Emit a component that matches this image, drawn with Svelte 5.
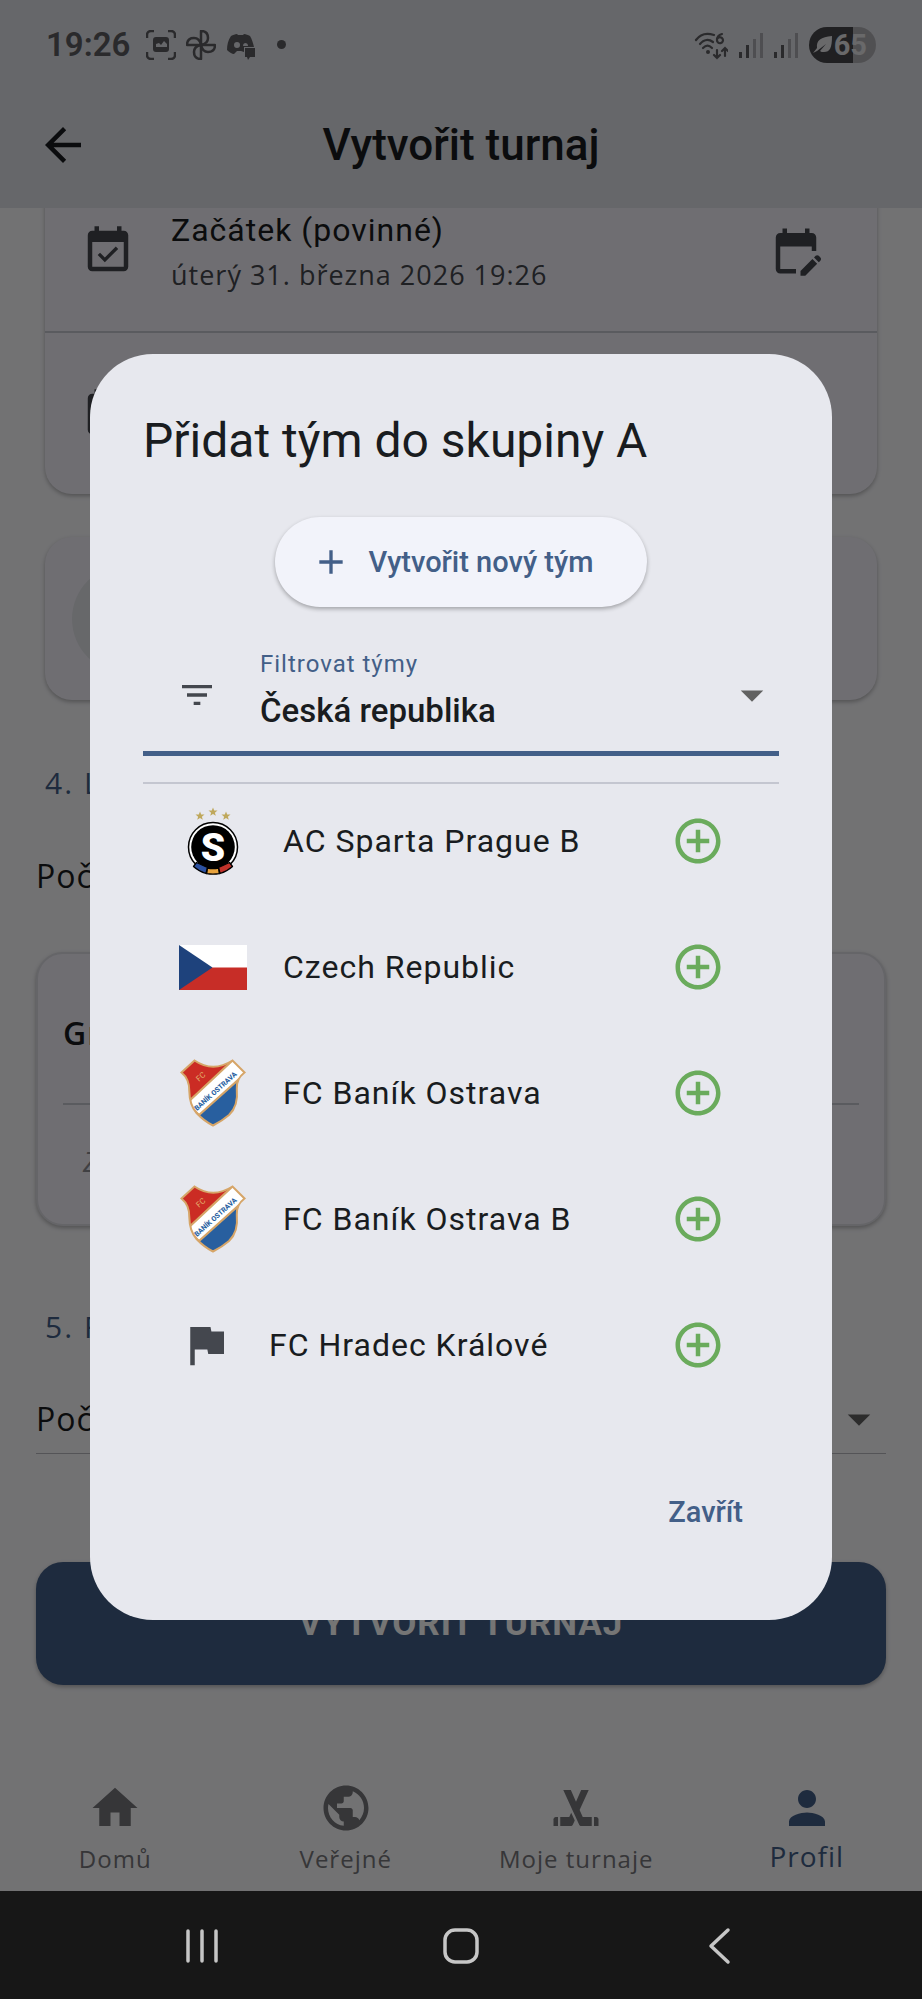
<script>
  const teams = [
    { name: 'AC Sparta Prague B', logo: 'sparta' },
    { name: 'Czech Republic', logo: 'czech' },
    { name: 'FC Baník Ostrava', logo: 'banik' },
    { name: 'FC Baník Ostrava B', logo: 'banik' },
    { name: 'FC Hradec Králové', logo: 'none' }
  ];

  const tabs = [
    { label: 'Domů', icon: 'home' },
    { label: 'Veřejné', icon: 'globe' },
    { label: 'Moje turnaje', icon: 'sticks' },
    { label: 'Profil', icon: 'person', active: true }
  ];

  const star = 'M0-4.6 1.2-1.5 4.5-1.4 1.9.7 2.8 3.8 0 2-2.8 3.8-1.9.7-4.5-1.4-1.2-1.5Z';
  const shield =
    'M15.5 1.5Q34 14 53.5 1.5L65.5 13.5Q57 20 57.8 30 59.5 47 50 56 43 62 34 66.5 25 62 17.5 54 10.5 46 10.3 32 10.5 20 2.5 13.5Z';
</script>

{#snippet calendarCheck()}
  <svg class="icon" viewBox="0 0 24 24" aria-hidden="true"><path d="M16.53 11.06 15.47 10l-4.88 4.88-2.12-2.12-1.06 1.06L10.59 17l5.94-5.94zM19 3h-1V1h-2v2H8V1H6v2H5c-1.11 0-1.99.9-1.99 2L3 19c0 1.1.89 2 2 2h14c1.1 0 2-.9 2-2V5c0-1.1-.9-2-2-2zm0 16H5V8h14v11z" /></svg>
{/snippet}

{#snippet arrowDown()}
  <svg class="icon arrow" viewBox="0 0 24 24" aria-hidden="true"><path d="m7 10 5 5 5-5z" /></svg>
{/snippet}

<div class="screen">
  <div class="app">
    <div class="status">
      <div class="status-left">
        <span class="clock">19:26</span>
        <svg width="30" height="30" viewBox="0 0 30 30" aria-hidden="true">
          <path d="M1 8V5a4 4 0 0 1 4-4h3M22 1h3a4 4 0 0 1 4 4v3M29 22v3a4 4 0 0 1-4 4h-3M8 29H5a4 4 0 0 1-4-4v-3" fill="none" stroke="currentColor" stroke-width="2.5" />
          <path fill-rule="evenodd" d="M10 7h10a3 3 0 0 1 3 3v9a3 3 0 0 1-3 3H10a3 3 0 0 1-3-3v-9a3 3 0 0 1 3-3Zm0 7v3h11v-3l-3-3-3 4-2-2Z" />
        </svg>
        <svg width="30" height="30" viewBox="0 0 30 30" aria-hidden="true">
          <g fill="none" stroke="currentColor" stroke-width="2.5" stroke-linejoin="round">
            <path d="M15 15V1c5 0 7 3 7 7 0 3-2 6-7 7Z" />
            <path d="M15 15h14c0 5-3 7-7 7-3 0-6-2-7-7Z" />
            <path d="M15 15v14c-5 0-7-3-7-7 0-3 2-6 7-7Z" />
            <path d="M15 15H1c0-5 3-7 7-7 3 0 6 2 7 7Z" />
          </g>
        </svg>
        <svg width="30" height="30" viewBox="0 0 30 30" aria-hidden="true">
          <path fill-rule="evenodd" d="M5 6c2-1 4-2 6-2l1 1h5l1-1c2 0 4 1 6 2 2 3 3 7 4 11H18v5l-3-1h-4l-3 3c-2 0-5-2-7-4C1 15 2 10 5 6Zm6 6a3 3 0 1 0 0 6 3 3 0 0 0 0-6Zm8 1a3 3 0 0 0-2 3h5a3 3 0 0 0-3-3Z" />
          <path d="M19 18h10v9h-5l-2 3-1-3h-2Z" />
        </svg>
        <span class="dot"></span>
      </div>
      <div class="status-right">
        <svg width="34" height="30" viewBox="0 0 34 30" aria-hidden="true">
          <g fill="none" stroke="currentColor" stroke-width="2.2" stroke-linecap="round">
            <path d="M2 10C7 3 14 3 20 5" />
            <path d="M6 14c4-5 9-5 13-2" />
            <path d="M9 18c3-3 6-3 9 0" />
            <path d="M28 4c-4 1-5 4-5 6a3 3 0 1 0 1-2" />
            <path d="M23 20v8m-3-3 3 3 3-3M31 26v-8m-3 3 3-3 3 3" />
          </g>
          <circle cx="14" cy="22" r="2" />
        </svg>
        {#each [0, 1] as sim (sim)}
          <svg width="24" height="26" viewBox="0 0 24 26" aria-hidden="true">
            <path d="M0 20h3v6H0ZM7 13h3v13H7Z" />
            <path d="M14 7h3v19h-3ZM21 1h3v25h-3Z" opacity=".4" />
          </svg>
        {/each}
        <span class="battery">
          <svg width="20" height="20" viewBox="0 0 20 20" aria-hidden="true"><path d="M19 1c0 12-2 16-8 16-2 0-3 0-4-1l6-7-9 7-4 2 4-5C3 5 8 2 19 1Z" /></svg>
          <span>65</span>
        </span>
      </div>
    </div>

    <header class="appbar">
      <button class="back" aria-label="Zpět">
        <svg class="icon" viewBox="0 0 24 24" aria-hidden="true"><path d="M20 11H7.83l5.59-5.59L12 4l-8 8 8 8 1.41-1.41L7.83 13H20v-2z" /></svg>
      </button>
      <h1>Vytvořit turnaj</h1>
    </header>

    <main class="viewport">
      <div class="form">
        <section class="card dates">
          <div class="date-row">
            {@render calendarCheck()}
            <div class="date-text">
              <span class="body">Začátek (povinné)</span>
              <span class="sub">úterý 31. března 2026 19:26</span>
            </div>
            <svg class="icon" viewBox="0 0 24 24" aria-hidden="true"><path d="M12 22H5c-1.11 0-2-.9-2-2L3.01 6c0-1.1.88-2 1.99-2h1V2h2v2h8V2h2v2h1c1.1 0 2 .9 2 2v6h-2v-2H5v10h7v2zm10.13-5.01.71-.71c.39-.39.39-1.02 0-1.41l-.71-.71c-.39-.39-1.02-.39-1.41 0l-.71.71 2.12 2.12zm-.71.71-5.3 5.3H14v-2.12l5.3-5.3 2.12 2.12z" /></svg>
          </div>
          <div class="date-row">
            {@render calendarCheck()}
          </div>
        </section>

        <section class="card place"><span class="avatar"></span></section>

        <h2><span>4.</span><span>Losy</span></h2>
        <p class="setting">Počet</p>

        <section class="card group">
          <h3>Group A</h3>
          <p>Zatím nic</p>
        </section>

        <h2 class="late"><span>5.</span><span>Finále</span></h2>
        <div class="dropdown">
          <select aria-label="Počet"><option>Počet</option></select>
          {@render arrowDown()}
        </div>

        <button class="submit">VYTVOŘIT TURNAJ</button>
      </div>
    </main>

    <nav class="tabs">
      {#each tabs as tab (tab.label)}
        <button class="tab" class:active={tab.active}>
          <svg class="icon" viewBox="0 0 24 24" aria-hidden="true">
            {#if tab.icon === 'home'}
              <path d="M10 20v-6h4v6h5v-8h3L12 3 2 12h3v8z" />
            {:else if tab.icon === 'globe'}
              <path d="M12 2C6.48 2 2 6.48 2 12s4.48 10 10 10 10-4.48 10-10S17.52 2 12 2zm-1 17.93c-3.95-.49-7-3.85-7-7.93 0-.62.08-1.21.21-1.79L9 15v1c0 1.1.9 2 2 2v1.93zm6.9-2.54c-.26-.81-1-1.39-1.9-1.39h-1v-3c0-.55-.45-1-1-1H8v-2h2c.55 0 1-.45 1-1V7h2c1.1 0 2-.9 2-2v-.41c2.93 1.19 5 4.06 5 7.41 0 2.08-.8 3.97-2.1 5.39z" />
            {:else if tab.icon === 'sticks'}
              <path d="M2 17v3h2v-4H3c-.55 0-1 .45-1 1z" />
              <path d="M9 16H5v4h4.69c.38 0 .72-.21.89-.55l.87-1.9-1.59-3.48L9 16z" />
              <path d="M21.71 16.29c-.18-.18-.43-.29-.71-.29h-1v4h2v-3c0-.28-.11-.53-.29-.71z" />
              <path d="M13.6 12.84 17.65 4H14.3l-1.76 3.97-.49 1.1-.05.14L9.7 4H6.35l4.05 8.84 1.52 3.32.08.18 1.42 3.1c.16.35.51.56.89.56H19v-4h-4l-1.4-3.16z" />
            {:else}
              <path d="M12 12c2.21 0 4-1.79 4-4s-1.79-4-4-4-4 1.79-4 4 1.79 4 4 4zm0 2c-2.67 0-8 1.34-8 4v2h16v-2c0-2.66-5.33-4-8-4z" />
            {/if}
          </svg>
          <span>{tab.label}</span>
        </button>
      {/each}
    </nav>

    <div class="scrim">
      <div class="dialog" role="dialog" aria-modal="true" aria-labelledby="dialog-title">
        <h2 id="dialog-title">Přidat tým do skupiny A</h2>

        <button class="create">
          <svg width="40" height="40" viewBox="0 0 24 24" aria-hidden="true"><path d="M19 13h-6v6h-2v-6H5v-2h6V5h2v6h6v2z" /></svg>
          Vytvořit nový tým
        </button>

        <div class="filter">
          <svg class="filter-icon" width="40" height="40" viewBox="0 0 24 24" aria-hidden="true"><path d="M10 18h4v-2h-4v2zM3 6v2h18V6H3zm3 7h12v-2H6v2z" /></svg>
          <div class="filter-text">
            <label for="team-filter">Filtrovat týmy</label>
            <select id="team-filter"><option>Česká republika</option></select>
          </div>
          {@render arrowDown()}
        </div>

        <ul class="teams">
          {#each teams as team, index (team.name)}
            <li>
              {#if team.logo === 'sparta'}
                <svg width="68" height="68" viewBox="0 0 68 68" aria-hidden="true">
                  <g fill="#bfa85c">
                    <path d={star} transform="translate(21 9)" />
                    <path d={star} transform="translate(34 5)" />
                    <path d={star} transform="translate(47 9)" />
                  </g>
                  <circle cx="34" cy="40" r="24.5" fill="#fff" stroke="#000" stroke-width="1.5" />
                  <circle cx="34" cy="40" r="21.8" fill="#000" />
                  <text class="sparta-s" x="34" y="54" text-anchor="middle">S</text>
                  <g stroke="#000" stroke-width="1.3" stroke-linejoin="round">
                    <path d="m17.5 55.5 11 5-1.5 6q-7-2-12.5-7Z" fill="#2c51a0" />
                    <path d="m50.5 55.5-11 5 1.500 6q7-2 12.500-7Z" fill="#c0322a" />
                    <path d="M28.500 61q5.500 1 11 0l.8 5.700q-6.300 1-12.600 0Z" fill="#e8a33d" />
                  </g>
                </svg>
              {:else if team.logo === 'czech'}
                <svg width="68" height="45" viewBox="0 0 68 45" aria-hidden="true">
                  <path d="M0 0h68v23H0Z" fill="#fff" />
                  <path d="M0 22.500h68V45H0Z" fill="#c72d27" />
                  <path d="m0 0 33.500 22.500L0 45Z" fill="#1e427c" />
                </svg>
              {:else if team.logo === 'banik'}
                <svg width="68" height="68" viewBox="0 0 68 68" aria-hidden="true">
                  <clipPath id="shield-{index}"><path d={shield} /></clipPath>
                  <g clip-path="url(#shield-{index})">
                    <path d="M0 0h68v68H0Z" fill="#cb2c24" />
                    <path d="M68 10v58H0L18 56Z" fill="#285f9f" />
                    <path d="M8 44 54 1l14 12-48 43Z" fill="#fff" stroke="#d6a568" stroke-width="2.200" />
                  </g>
                  <path d={shield} fill="none" stroke="#d6a568" stroke-width="2" />
                  <text class="banik-name" transform="translate(18 52) rotate(-42)">BANÍK OSTRAVA</text>
                  <text class="banik-fc" transform="translate(20 23) rotate(-42)">FC</text>
                </svg>
              {:else}
                <svg class="icon flag" viewBox="0 0 24 24" aria-hidden="true"><path d="M14.400 6 14 4H5v17h2v-7h5.600l.4 2h7V6z" /></svg>
              {/if}
              <span class="team-name">{team.name}</span>
              <button class="add" aria-label="Přidat {team.name}">
                <svg class="icon" viewBox="0 0 24 24" aria-hidden="true"><path d="M13 7h-2v4H7v2h4v4h2v-4h4v-2h-4V7zm-1-5C6.480 2 2 6.480 2 12s4.480 10 10 10 10-4.480 10-10S17.520 2 12 2zm0 18c-4.410 0-8-3.590-8-8s3.590-8 8-8 8 3.590 8 8-3.590 8-8 8z" /></svg>
              </button>
            </li>
          {/each}
        </ul>

        <button class="close">Zavřít</button>
      </div>
    </div>
  </div>

  <div class="system">
    <button aria-label="Poslední aplikace">
      <svg width="34" height="36" viewBox="0 0 34 36" aria-hidden="true"><path d="M3 3v30M17 3v30M31 3v30" /></svg>
    </button>
    <button aria-label="Plocha">
      <svg width="36" height="36" viewBox="0 0 36 36" aria-hidden="true"><rect x="2" y="2" width="32" height="32" rx="10" /></svg>
    </button>
    <button aria-label="Zpět">
      <svg width="24" height="38" viewBox="0 0 24 38" aria-hidden="true"><path d="M20 3 3 19l17 16" /></svg>
    </button>
  </div>
</div>

<style>
  :global(body) {
    margin: 0;
    background: #171717;
  }

  .screen {
    display: flex;
    flex-direction: column;
    min-height: 100vh;
    font-family: Roboto, sans-serif;
    color: #191c20;
  }

  button,
  select {
    border: 0;
    padding: 0;
    margin: 0;
    background: none;
    font: inherit;
    letter-spacing: inherit;
    color: inherit;
  }

  select {
    appearance: none;
    width: 100%;
    outline: 0;
  }

  h1,
  h2,
  h3,
  p,
  ul {
    margin: 0;
    padding: 0;
  }

  svg {
    display: block;
    flex: none;
    fill: currentColor;
  }

  .icon {
    width: 54px;
    height: 54px;
  }

  .app {
    position: relative;
    flex: 1;
    display: flex;
    flex-direction: column;
    background: #f8f8fb;
  }

  .status {
    display: flex;
    justify-content: space-between;
    align-items: center;
    box-sizing: border-box;
    height: 82px;
    padding: 7px 46px 0;
    background: #dfe0e6;
    color: #5c5c61;
  }

  .status-left,
  .status-right {
    display: flex;
    align-items: center;
    gap: 11px;
  }

  .status-left {
    gap: 10px;
  }

  .clock {
    margin-right: 6px;
    font-size: 33px;
    font-weight: 600;
    line-height: 40px;
  }

  .dot {
    width: 9px;
    height: 9px;
    margin-left: 11px;
    border-radius: 50%;
    background: currentColor;
  }

  .battery {
    display: flex;
    align-items: center;
    gap: 1px;
    height: 36px;
    padding: 0 9px 0 4px;
    border-radius: 18px;
    background: linear-gradient(90deg, #46464a 65%, #afafb4 65%);
    color: #e4e4e8;
    font-size: 29px;
    font-weight: 700;
  }

  .appbar {
    display: grid;
    grid-template-columns: 54px 1fr 54px;
    align-items: center;
    height: 126px;
    padding: 0 36px;
    background: #dfe0e6;
    color: #191c20;
  }

  h1 {
    font-size: 44px;
    font-weight: 500;
    line-height: 56px;
    text-align: center;
  }

  .viewport {
    flex: 1;
    overflow: hidden;
  }

  /* The form is shown slightly scrolled under the app bar. */
  .form {
    display: flex;
    flex-direction: column;
    margin-top: -38px;
    padding: 0 36px 78px;
  }

  .card {
    background: #f2f0f9;
    border-radius: 27px;
    box-shadow: 0 2px 4px rgb(0 0 0 / 28%);
  }

  .dates,
  .place {
    margin: 0 9px 43px;
  }

  .date-row {
    display: flex;
    align-items: center;
    gap: 36px;
    min-height: 161px;
    padding: 0 54px 0 36px;
    color: #44474e;
  }

  .date-row + .date-row {
    border-top: 2px solid #c4c6d0;
  }

  .date-text {
    flex: 1;
    display: flex;
    flex-direction: column;
  }

  .body {
    font-size: 32px;
    line-height: 49px;
    letter-spacing: 1px;
    color: #191c20;
  }

  .sub {
    font-family: 'Open Sans', sans-serif;
    font-size: 27px;
    line-height: 40px;
    letter-spacing: 1px;
  }

  .place {
    display: flex;
    align-items: center;
    min-height: 163px;
    padding: 0 27px;
    margin-bottom: 63px;
  }

  .avatar {
    width: 108px;
    height: 108px;
    border-radius: 50%;
    background: #e1e2e8;
  }

  .form h2 {
    display: flex;
    gap: 10px;
    padding-left: 9px;
    font-family: 'Open Sans', sans-serif;
    font-size: 30px;
    font-weight: 500;
    line-height: 40px;
    letter-spacing: 2px;
    color: #435f88;
  }

  .setting,
  .dropdown {
    font-family: 'Open Sans', sans-serif;
    font-size: 32px;
    line-height: 48px;
    letter-spacing: 1px;
  }

  .setting {
    margin: 49px 0 52px;
  }

  .group {
    padding: 55px 25px 43px;
    border: 2px solid #dcdce2;
    font-family: 'Open Sans', sans-serif;
  }

  .group h3 {
    padding-bottom: 46px;
    border-bottom: 2px solid #c4c6d0;
    font-size: 32px;
    font-weight: 600;
    line-height: 48px;
    letter-spacing: 1px;
  }

  .group p {
    padding: 36px 20px 0;
    font-size: 28px;
    font-style: italic;
    line-height: 40px;
    color: #8b8b92;
  }

  .form .late {
    margin: 81px 0 45px;
  }

  .dropdown {
    display: flex;
    align-items: center;
    padding-bottom: 7px;
    border-bottom: 1px solid #b8b8bd;
  }

  .arrow {
    color: #616161;
    pointer-events: none;
  }

  .submit {
    min-height: 123px;
    margin-top: 108px;
    border-radius: 27px;
    background: #435f88;
    box-shadow: 0 2px 4px rgb(0 0 0 / 28%);
    color: #fff;
    font-size: 35px;
    font-weight: 700;
    letter-spacing: 1px;
  }

  .tabs {
    display: grid;
    grid-template-columns: repeat(4, 1fr);
    background: #f8f8fb;
    font-family: 'Open Sans', sans-serif;
  }

  .tab {
    display: flex;
    flex-direction: column;
    align-items: center;
    gap: 6px;
    padding: 18px 0 14px;
    color: #76767a;
    font-size: 24px;
    line-height: 36px;
    letter-spacing: 1px;
  }

  .tab.active {
    gap: 3px;
    color: #435f88;
    font-size: 28px;
  }

  .scrim {
    position: absolute;
    inset: 0;
    display: flex;
    align-items: center;
    padding: 83px 90px 0;
    background: rgb(0 0 0 / 54%);
  }

  .dialog {
    flex: 1;
    display: flex;
    flex-direction: column;
    padding: 54px 53px;
    border-radius: 63px;
    background: #e7e8ee;
  }

  .dialog h2 {
    font-size: 48px;
    font-weight: 400;
    line-height: 65px;
  }

  .create {
    display: flex;
    align-items: center;
    align-self: center;
    gap: 18px;
    height: 90px;
    margin: 44px 0 27px;
    padding: 0 54px 0 36px;
    border-radius: 45px;
    background: #f2f3fa;
    box-shadow: 0 2px 4px rgb(0 0 0 / 30%);
    color: #435f88;
    font-size: 29px;
    font-weight: 500;
  }

  .filter {
    display: grid;
    grid-template-columns: 108px 1fr 54px;
    align-items: center;
    padding: 16px 0 11px;
    border-bottom: 5px solid #435f88;
  }

  .filter-icon {
    justify-self: center;
    color: #44474e;
  }

  .filter-text {
    display: flex;
    flex-direction: column;
    gap: 12px;
    padding: 0 0 8px 9px;
  }

  .filter label {
    font-size: 24px;
    line-height: 28px;
    letter-spacing: 1px;
    color: #435f88;
  }

  .filter select {
    height: 42px;
    font-size: 33px;
    font-weight: 500;
    line-height: 42px;
  }

  .teams {
    display: flex;
    flex-direction: column;
    gap: 12px;
    margin: 26px 0 56px;
    border-top: 2px solid #c4c6d0;
    list-style: none;
  }

  .teams li {
    display: flex;
    align-items: center;
    gap: 36px;
    height: 114px;
    padding: 0 54px 0 36px;
  }

  .team-name {
    flex: 1;
    font-size: 32px;
    line-height: 48px;
    letter-spacing: 1px;
  }

  .flag {
    color: #44474e;
  }

  .add {
    color: #6aab5c;
  }

  .sparta-s {
    font-size: 39px;
    font-weight: 900;
    fill: #fff;
  }

  .banik-name {
    font-size: 7px;
    font-weight: 800;
    fill: #285f9f;
  }

  .banik-fc {
    font-size: 8px;
    fill: #e3b06c;
  }

  .close {
    align-self: flex-end;
    height: 108px;
    padding: 0 36px;
    color: #435f88;
    font-size: 29px;
    font-weight: 500;
  }

  .system {
    display: grid;
    grid-template-columns: 1fr 1fr 1fr;
    box-sizing: border-box;
    height: 108px;
    padding: 2px 72px 0;
    background: #171717;
    color: #c6c6c6;
  }

  .system button {
    display: grid;
    place-items: center;
  }

  .system svg {
    fill: none;
    stroke: currentColor;
    stroke-width: 3.5;
    stroke-linecap: round;
    stroke-linejoin: round;
  }
</style>
